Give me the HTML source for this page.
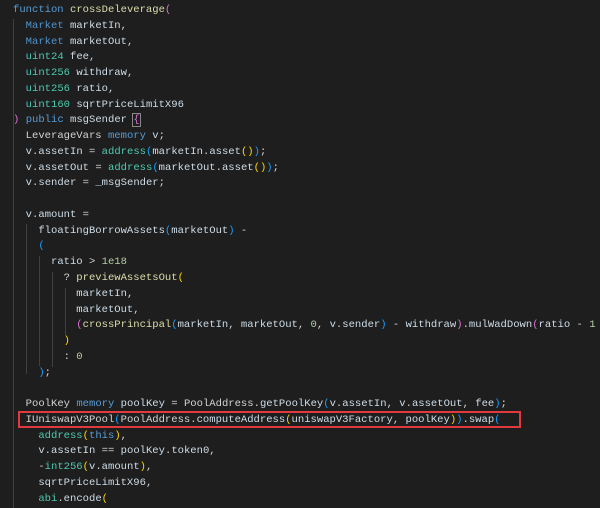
<!DOCTYPE html>
<html><head><meta charset="utf-8"><style>
html,body{margin:0;padding:0;background:#1e1e1e;width:600px;height:508px;overflow:hidden}
pre{margin:0;padding:3px 0 0 13px;font-family:"Liberation Mono",monospace;font-size:10.55px;line-height:15.77px;color:#d4d4d4;white-space:pre;position:relative}
.k{color:#569cd6}.t{color:#4ec9b0}.v{color:#cfdde8}.f{color:#dcdcaa}.n{color:#b5cea8}.u{color:#d4d4d4}
.y{color:#ffd700}.p{color:#da70d6}.b{color:#179fff}
.box{position:absolute;left:18px;top:411px;width:503px;height:17px;border:2px solid #e0393e;box-sizing:border-box}
.g{position:absolute;width:1px;background:#404040}
</style></head><body>
<div class="g" style="left:13px;top:19px;height:489px"></div>
<div class="g" style="left:26px;top:224px;height:150px"></div>
<div class="g" style="left:39px;top:256px;height:110px"></div>
<div class="g" style="left:52px;top:272px;height:95px"></div>
<div class="g" style="left:65px;top:288px;height:47px"></div>
<pre><span class="k">function</span> <span class="f">crossDeleverage</span><span class="p">(</span>
  <span class="t" style="color:#4e94ce">Market</span> <span class="v">marketIn</span>,
  <span class="t" style="color:#4e94ce">Market</span> <span class="v">marketOut</span>,
  <span class="t">uint24</span> <span class="v">fee</span>,
  <span class="t">uint256</span> <span class="v">withdraw</span>,
  <span class="t">uint256</span> <span class="v">ratio</span>,
  <span class="t">uint160</span> <span class="v">sqrtPriceLimitX96</span>
<span class="p">)</span> <span class="k">public</span> <span class="v">msgSender</span> <span class="p" style="outline:1px solid #888">{</span>
  <span class="u">LeverageVars</span> <span class="k">memory</span> <span class="v">v</span>;
  <span class="v">v</span>.<span class="v">assetIn</span> = <span class="t">address</span><span class="b">(</span><span class="v">marketIn</span>.<span class="v">asset</span><span class="y">()</span><span class="b">)</span>;
  <span class="v">v</span>.<span class="v">assetOut</span> = <span class="t">address</span><span class="b">(</span><span class="v">marketOut</span>.<span class="v">asset</span><span class="y">()</span><span class="b">)</span>;
  <span class="v">v</span>.<span class="v">sender</span> = <span class="v">_msgSender</span>;

  <span class="v">v</span>.<span class="v">amount</span> =
    <span class="v">floatingBorrowAssets</span><span class="b">(</span><span class="v">marketOut</span><span class="b">)</span> -
    <span class="b">(</span>
      <span class="v">ratio</span> &gt; <span class="n">1e18</span>
        ? <span class="f">previewAssetsOut</span><span class="y">(</span>
          <span class="v">marketIn</span>,
          <span class="v">marketOut</span>,
          <span class="p">(</span><span class="f">crossPrincipal</span><span class="b">(</span><span class="v">marketIn</span>, <span class="v">marketOut</span>, <span class="n">0</span>, <span class="v">v</span>.<span class="v">sender</span><span class="b">)</span> - <span class="v">withdraw</span><span class="p">)</span>.<span class="v">mulWadDown</span><span class="p">(</span><span class="v">ratio</span> - <span class="n">1</span>
        <span class="y">)</span>
        : <span class="n">0</span>
    <span class="b">)</span>;

  <span class="u">PoolKey</span> <span class="k">memory</span> <span class="v">poolKey</span> = <span class="u">PoolAddress</span>.<span class="v">getPoolKey</span><span class="b">(</span><span class="v">v</span>.<span class="v">assetIn</span>, <span class="v">v</span>.<span class="v">assetOut</span>, <span class="v">fee</span><span class="b">)</span>;
  <span class="u">IUniswapV3Pool</span><span class="b">(</span><span class="u">PoolAddress</span>.<span class="v">computeAddress</span><span class="y">(</span><span class="v">uniswapV3Factory</span>, <span class="v">poolKey</span><span class="y">)</span><span class="b">)</span>.<span class="v">swap</span><span class="b">(</span>
    <span class="t">address</span><span class="y">(</span><span class="k">this</span><span class="y">)</span>,
    <span class="v">v</span>.<span class="v">assetIn</span> == <span class="v">poolKey</span>.<span class="v">token0</span>,
    -<span class="t">int256</span><span class="y">(</span><span class="v">v</span>.<span class="v">amount</span><span class="y">)</span>,
    <span class="v">sqrtPriceLimitX96</span>,
    <span class="t">abi</span>.<span class="v">encode</span><span class="y">(</span>
</pre>
<div class="box"></div>
</body></html>
